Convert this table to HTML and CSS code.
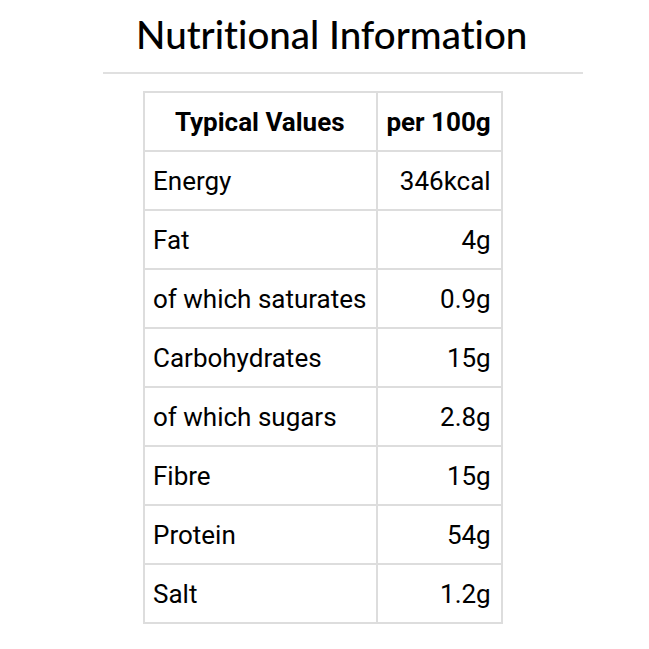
FILE: index.html
```html
<!DOCTYPE html>
<html>
<head>
<meta charset="utf-8">
<link rel="stylesheet" href="styles.css">
</head>
<body>
<div class="page">
  <h1 class="title">Nutritional Information</h1>
  <div class="rule"></div>
  <table class="nutri">
    <thead>
      <tr><th>Typical Values</th><th>per 100g</th></tr>
    </thead>
    <tbody>
      <tr><td>Energy</td><td class="val">346kcal</td></tr>
      <tr><td>Fat</td><td class="val">4g</td></tr>
      <tr><td>of which saturates</td><td class="val">0.9g</td></tr>
      <tr><td>Carbohydrates</td><td class="val">15g</td></tr>
      <tr><td>of which sugars</td><td class="val">2.8g</td></tr>
      <tr><td>Fibre</td><td class="val">15g</td></tr>
      <tr><td>Protein</td><td class="val">54g</td></tr>
      <tr><td>Salt</td><td class="val">1.2g</td></tr>
    </tbody>
  </table>
</div>
</body>
</html>
```
FILE: styles.css
```css
html, body {
  margin: 0;
  padding: 0;
  background: #fff;
}
.page {
  width: 649px;
  display: flex;
  flex-direction: column;
  align-items: flex-start;
}
.title {
  margin: 12px 0 0 136px;
  font-family: "Lato", "Noto Sans", sans-serif;
  font-weight: 500;
  font-size: 38.5px;
  line-height: 44px;
  color: #000;
  font-variant-ligatures: none;
}
.rule {
  margin: 16px 0 0 103px;
  width: 480px;
  height: 2px;
  background: #e0e0e0;
}
.nutri {
  margin: 17px 0 0 143px;
  border-collapse: collapse;
  font-family: "Roboto", "Liberation Sans", sans-serif;
  font-size: 26px;
  color: #000;
}
.nutri th, .nutri td {
  border: 2px solid #dddddd;
  height: 59px;
  padding: 0 10px 0 8px;
  box-sizing: border-box;
}
.nutri th {
  font-weight: 700;
  text-align: center;
}
.nutri td {
  font-weight: 400;
  text-align: left;
}
.nutri td.val {
  text-align: right;
}
```
